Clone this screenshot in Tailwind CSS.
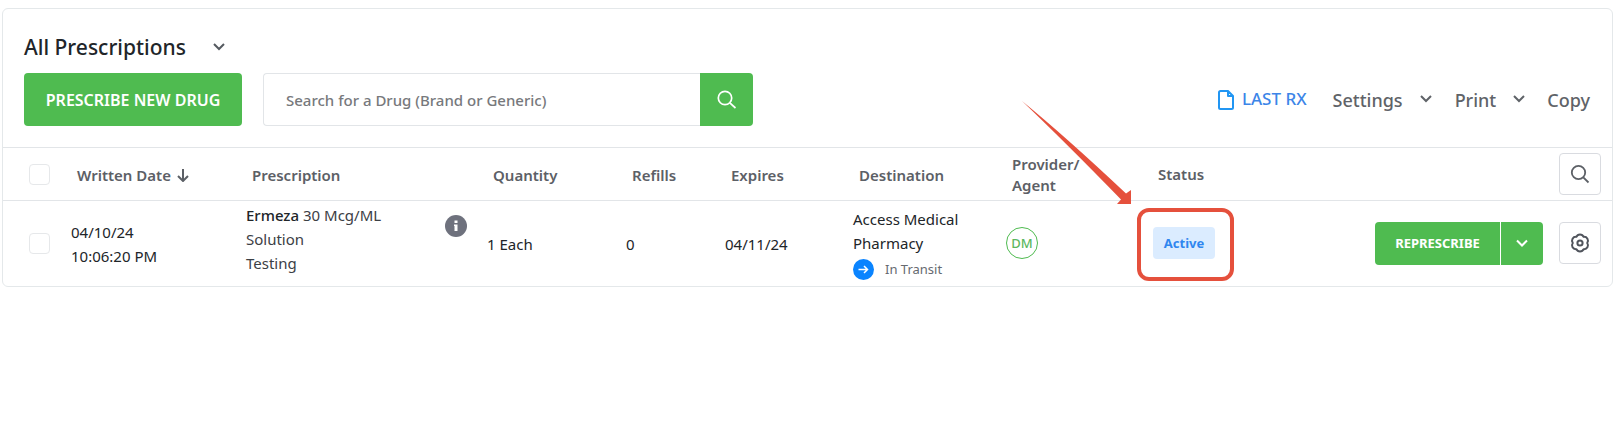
<!doctype html>
<html lang="en">
<head>
    <meta charset="UTF-8">
    <meta name="viewport" content="width=device-width, initial-scale=1.0">
    <script src="https://cdn.jsdelivr.net/npm/@tailwindcss/browser@4"></script>
    <title>All Prescriptions</title>
</head>
<body class="bg-white pt-2 pl-[2px] pr-1 font-['Noto_Sans','Open_Sans',sans-serif] text-[#212529]">
<main class="border border-[#e4e8ea] rounded-md">
    <header class="pl-[21px] pr-[22px] pt-6 pb-[21px] border-b border-[#e2e5e8]">
        <button class="flex items-center gap-6 text-[21px] leading-7 font-medium">
            All Prescriptions
            <svg class="w-4 h-4 text-[#555a60]" viewBox="0 0 16 16" fill="none" stroke="currentColor" stroke-width="2">
                <path d="M4 5l5 5 5-5"/>
            </svg>
        </button>
        <div class="mt-3 flex items-center justify-between">
            <div class="flex items-center gap-[21px]">
                <button class="h-[53px] w-[218px] rounded bg-[#4fbb50] text-white text-base font-semibold">PRESCRIBE NEW DRUG</button>
                <form class="flex">
                    <input type="text" id="drug" aria-label="Search for a Drug" placeholder="Search for a Drug (Brand or Generic)"
                           class="h-[53px] w-[437px] border border-r-0 border-[#e2e5e8] rounded-l px-[22px] text-[15px] font-medium
                           placeholder:text-[#77797c]">
                    <button type="button" aria-label="Search drugs"
                            class="h-[53px] w-[53px] flex items-center justify-center rounded-r bg-[#4fbb50] text-white">
                        <svg class="w-5 h-5" viewBox="0 0 20 20" fill="none" stroke="currentColor" stroke-width="1.700">
                            <circle cx="8" cy="8" r="6.700"/>
                            <path d="M12.800 12.800L18.500 18"/>
                        </svg>
                    </button>
                </form>
            </div>
            <nav class="flex items-center text-lg font-medium text-[#5f6368]">
                <a href="#" class="flex items-center gap-2 mr-[26px] text-[17px] text-[#3c85e8]">
                    <svg class="w-4 h-5 text-[#2196f3]" viewBox="0 0 16 20" fill="none" stroke="currentColor" stroke-width="2" stroke-linejoin="round">
                        <path d="M10 1H2.500Q1 1 1 2.500V17.500Q1 19 2.500 19H13.500Q15 19 15 17.500V6L10 1V6H15"/>
                    </svg>
                    LAST RX
                </a>
                <button class="flex items-center gap-[15px] mr-[21px]">
                    Settings
                    <svg class="w-4 h-4" viewBox="0 0 16 16" fill="none" stroke="currentColor" stroke-width="2"><path d="M3 4l5 5 5-5"/></svg>
                </button>
                <button class="flex items-center gap-[15px] mr-5">
                    Print
                    <svg class="w-4 h-4" viewBox="0 0 16 16" fill="none" stroke="currentColor" stroke-width="2"><path d="M3 4l5 5 5-5"/></svg>
                </button>
                <button>Copy</button>
            </nav>
        </div>
    </header>
    <table class="w-full table-fixed text-left text-[15px]">
        <colgroup>
            <col class="w-[60px]">
            <col class="w-[175px]">
            <col class="w-[241px]">
            <col class="w-[139px]">
            <col class="w-[99px]">
            <col class="w-[128px]">
            <col class="w-[153px]">
            <col class="w-[147px]">
            <col>
        </colgroup>
        <thead class="leading-[21px] text-[#5c6066] border-b border-[#e2e5e8]">
            <tr class="h-[52px]">
                <th class="pl-[26px] pt-[2px]"><input type="checkbox" aria-label="Select all" class="block appearance-none w-[21px] h-[21px] border border-[#e6e8ea] rounded"></th>
                <th class="pl-[14px] pt-[3px] font-semibold">
                    <button class="flex items-center gap-[6px]">
                        Written Date
                        <svg class="w-3 h-[13px]" viewBox="0 0 12 13" fill="none" stroke="currentColor" stroke-width="2"><path d="M6 0V12M1 7l5 5 5-5"/></svg>
                    </button>
                </th>
                <th class="pl-[14px] pt-[3px] font-semibold">Prescription</th>
                <th class="pl-[14px] pt-[3px] font-semibold">Quantity</th>
                <th class="pl-[14px] pt-[3px] font-semibold">Refills</th>
                <th class="pl-[14px] pt-[3px] font-semibold">Expires</th>
                <th class="pl-[14px] pt-[3px] font-semibold">Destination</th>
                <th class="pl-[14px] pt-[3px] font-semibold">Provider/<br>Agent</th>
                <th class="pl-[13px] pt-px font-semibold">
                    <div class="flex items-center justify-between pr-[11px]">
                        Status
                        <button aria-label="Search table" class="w-[42px] h-[42px] flex items-center justify-center border border-[#d9dbe0] rounded">
                            <svg class="w-5 h-5" viewBox="0 0 20 20" fill="none" stroke="currentColor" stroke-width="1.800">
                                <circle cx="8.500" cy="8.500" r="6.700"/>
                                <path d="M13.300 13.300L18.500 18.500"/>
                            </svg>
                        </button>
                    </div>
                </th>
            </tr>
        </thead>
        <tbody class="leading-6">
            <tr class="h-[86px]">
                <td class="pl-[26px]"><input type="checkbox" aria-label="Select Ermeza" class="block appearance-none w-[21px] h-[21px] border border-[#e6e8ea] rounded"></td>
                <td class="pl-2 pt-[2px]">04/10/24<br>10:06:20 PM</td>
                <td class="pl-2 pr-3 pb-2">
                    <div class="flex justify-between">
                        <p class="text-[#3c4045]"><span class="text-[#212529] font-medium">Ermeza</span> 30 Mcg/ML<br>Solution<br>Testing</p>
                        <svg class="w-[22px] h-[22px] mt-3" viewBox="0 0 22 22">
                            <circle cx="11" cy="11" r="11" fill="#6e717d"/>
                            <path d="M9.500 5.500h3v2.500h-3zM9 9.500h3.500v6.500h-3V11H9z" fill="#fff"/>
                        </svg>
                    </div>
                </td>
                <td class="pl-2 pt-[2px]">1 Each</td>
                <td class="pl-2 pt-[2px]">0</td>
                <td class="pl-2 pt-[2px]">04/11/24</td>
                <td class="pl-2">
                    Access Medical<br>Pharmacy
                    <p class="flex items-center gap-[11px] mt-1 text-[13px] leading-5 text-[#666a70]">
                        <svg class="w-[21px] h-[21px]" viewBox="0 0 21 21">
                            <circle cx="10.500" cy="10.500" r="10.500" fill="#0a84ff"/>
                            <path d="M5.500 10.500h9M11 7l3.500 3.500L11 14" fill="none" stroke="#fff" stroke-width="1.500"/>
                        </svg>
                        In Transit
                    </p>
                </td>
                <td class="pl-2"><span class="flex w-8 h-8 items-center justify-center border border-[#4fbb50] rounded-full text-[13px] font-medium text-[#5cb85f]">DM</span></td>
                <td class="pl-2">
                    <div class="flex items-center justify-between pr-[11px]">
                        <div class="relative">
                            <span class="block w-[62px] h-8 rounded bg-[#dbecff] text-center text-[13px] leading-8 font-bold text-[#2f86ef]">Active</span>
                            <!-- callout frame and arrow around the status -->
                            <div class="absolute -left-4 -right-[19px] -top-[19px] -bottom-[22px] border-4 border-[#e5503c] rounded-xl pointer-events-none"></div>
                            <svg class="absolute -left-[132px] -top-[127px] w-[112px] h-[106px] pointer-events-none" viewBox="0 0 112 106">
                                <path d="M1 1Q45 37 105 93.500L110 90V104H96L100 99.500Q45 43 1 1Z" fill="#e5503c"/>
                            </svg>
                        </div>
                        <div class="flex items-center gap-4">
                            <div class="flex gap-px text-white">
                                <button class="w-[125px] h-[43px] rounded-l bg-[#4fbb50] text-[13px] font-bold">REPRESCRIBE</button>
                                <button aria-label="More actions" class="w-[42px] h-[43px] flex items-center justify-center rounded-r bg-[#4fbb50]">
                                    <svg class="w-4 h-4" viewBox="0 0 16 16" fill="none" stroke="currentColor" stroke-width="2"><path d="M3 5.500l5 5 5-5"/></svg>
                                </button>
                            </div>
                            <button aria-label="Row settings" class="w-[42px] h-[42px] flex items-center justify-center border border-[#d9dbe0] rounded text-[#50545c]">
                                <svg class="w-5 h-5" viewBox="0 0 20 20" fill="none" stroke="currentColor" stroke-width="2" stroke-linejoin="round">
                                    <path d="M6.400 3.800A3.900 3.900 0 0 1 13.600 3.800A3.900 3.900 0 0 1 17.200 10A3.900 3.900 0 0 1 13.600 16.200A3.900 3.900 0 0 1 6.400 16.200A3.900 3.900 0 0 1 2.800 10A3.900 3.900 0 0 1 6.400 3.800Z"/>
                                    <circle cx="10" cy="10" r="2.600"/>
                                </svg>
                            </button>
                        </div>
                    </div>
                </td>
            </tr>
        </tbody>
    </table>
</main>
</body>
</html>
